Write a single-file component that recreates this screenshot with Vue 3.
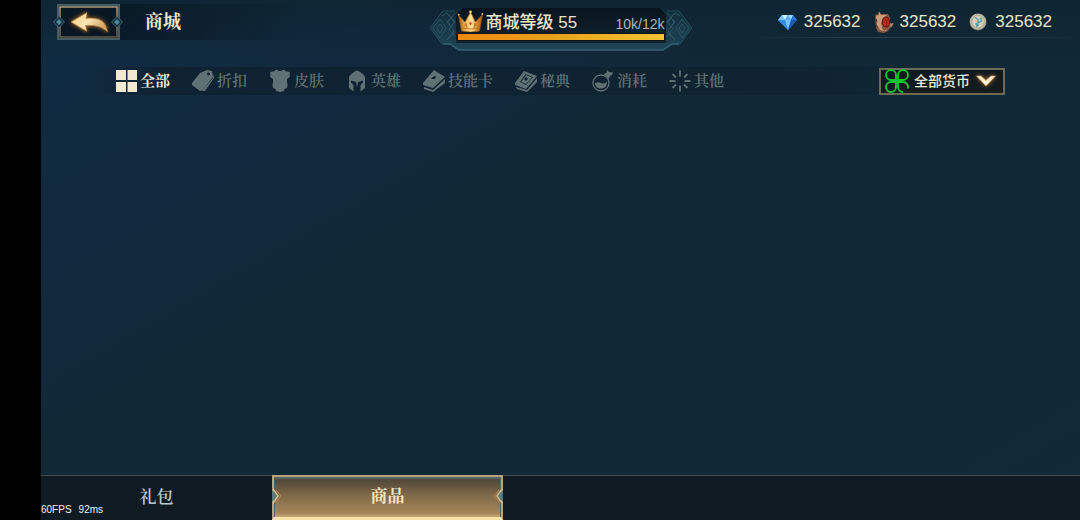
<script setup>
import { ref } from 'vue'

const categories = [
  { id: 'all', label: '全部' },
  { id: 'sale', label: '折扣' },
  { id: 'skin', label: '皮肤' },
  { id: 'hero', label: '英雄' },
  { id: 'card', label: '技能卡' },
  { id: 'book', label: '秘典' },
  { id: 'potion', label: '消耗' },
  { id: 'other', label: '其他' },
]
const activeCategory = ref('all')
const currency = ref('all')
const balances = [
  { id: 'gem', name: '钻石', amount: 325632 },
  { id: 'badge', name: '徽章', amount: 325632 },
  { id: 'coin', name: '银币', amount: 325632 },
]
const sections = [
  { id: 'packs', label: '礼包' },
  { id: 'goods', label: '商品' },
]
const activeSection = ref('goods')
</script>

<template>
  <div class="screen">
    <div class="stage">
      <header class="topbar">
        <div class="heading">
          <button class="back" type="button" aria-label="返回">
            <svg width="70" height="36" viewBox="0 0 70 36">
              <defs>
                <linearGradient id="arrowFill" x1="0" y1="0" x2="1" y2="0.4">
                  <stop offset="0" stop-color="#f6cf86" />
                  <stop offset="0.55" stop-color="#fbe6b4" />
                  <stop offset="1" stop-color="#d3a768" />
                </linearGradient>
                <linearGradient id="goldEdge" x1="0" y1="0" x2="0" y2="1">
                  <stop offset="0" stop-color="#b09a74" />
                  <stop offset="1" stop-color="#5f5b50" />
                </linearGradient>
              </defs>
              <rect x="5" y="1" width="61" height="34" fill="#0a1722" stroke="#465a62" stroke-width="2" />
              <rect x="7" y="3" width="57" height="30" fill="none" stroke="url(#goldEdge)" stroke-width="1.500" />
              <g fill="#102c3b" stroke="#4a6470" stroke-width="1">
                <path d="M6 12.500L11.500 18L6 23.500L.5 18Z" />
                <path d="M64 12.500L69.500 18L64 23.500L58.500 18Z" />
              </g>
              <path d="M6 15l3 3-3 3-3-3zM64 15l3 3-3 3-3-3z" fill="#4a8797" />
              <g class="arrow">
                <path d="M18 18L34 8.500l-1 6C46 13 53 17 54.500 28C49 22 42 21 32.500 21.500L34 27.500Z" fill="url(#arrowFill)" stroke="#b5783a" stroke-width=".6" stroke-linejoin="round" />
              </g>
            </svg>
          </button>
          <h1 class="title">商城</h1>
        </div>

        <section class="level">
          <svg class="level-frame" width="262" height="44" viewBox="0 0 262 44" aria-hidden="true">
            <defs>
              <linearGradient id="frameFill" x1="0" y1="0" x2="0" y2="1">
                <stop offset="0" stop-color="#102a38" />
                <stop offset="1" stop-color="#1f4656" />
              </linearGradient>
              <linearGradient id="plaque" x1="0" y1="0" x2="0" y2="1">
                <stop offset="0" stop-color="#09141d" />
                <stop offset="1" stop-color="#0e2431" />
              </linearGradient>
            </defs>
            <path d="M0 21L13 4H26L32 1H230L236 4H249L262 21L250 37H243L234 43H28L19 37H12Z" fill="url(#frameFill)" />
            <path d="M19 37H12L0 21L13 4H25M243 37h7L262 21L249 4H237" fill="none" stroke="#234c5c" />
            <path d="M13 37h7l9 6h204l9-6h7" fill="none" stroke="#356173" stroke-width="1.500" />
            <path d="M32 1H230L236 8V36H26V8Z" fill="url(#plaque)" />
            <g fill="none" stroke="#2b5363" stroke-width="1">
              <path d="M3 21l7-9 6 9-6 10zM7 21l3-4 3 4-3 5z" />
              <path d="M12 9l5-3 8 9-6 7 6 8M25 6l-8 9 7 9-7 9M17 6l8 9M17 33l8-8M21 11l-3 4 3 5 3-5z" />
            </g>
            <g transform="matrix(-1 0 0 1 262 0)" fill="none" stroke="#2b5363" stroke-width="1">
              <path d="M3 21l7-9 6 9-6 10zM7 21l3-4 3 4-3 5z" />
              <path d="M12 9l5-3 8 9-6 7 6 8M25 6l-8 9 7 9-7 9M17 6l8 9M17 33l8-8M21 11l-3 4 3 5 3-5z" />
            </g>
          </svg>
          <div class="level-row">
            <svg class="crown" width="27" height="22" viewBox="0 0 27 22" aria-hidden="true">
              <defs>
                <linearGradient id="crownFill" x1="0" y1="0" x2="1" y2="0">
                  <stop offset="0" stop-color="#a35c13" />
                  <stop offset=".35" stop-color="#f8c366" />
                  <stop offset=".55" stop-color="#ffe5a0" />
                  <stop offset=".75" stop-color="#d98f30" />
                  <stop offset="1" stop-color="#9c5a18" />
                </linearGradient>
              </defs>
              <path d="M4.500 21L1.500 5L8 12L13.500 2L18.500 12L25.500 4.500L22.500 21Q13.500 23 4.500 21Z" fill="url(#crownFill)" stroke="#9a5716" stroke-width=".7" />
              <path d="M5 18q8.500 2 17.500 0M9 13l1 5M18 13l-1 5" stroke="#ba7122" fill="none" stroke-width=".9" />
              <circle cx="13.500" cy="1.800" r="1.300" fill="#ffd37c" />
              <circle cx="1.700" cy="4.700" r="1" fill="#ef9c45" />
              <circle cx="25.300" cy="4" r="1" fill="#efaf50" />
              <path d="M13.500 11.500l1.500 2-1.500 2-1.500-2z" fill="#d64f35" />
              <circle cx="8.500" cy="15" r=".8" fill="#c95431" />
              <circle cx="18.500" cy="15" r=".8" fill="#c95431" />
            </svg>
            <span class="level-name">商城等级 55</span>
            <span class="level-count">10k/12k</span>
          </div>
          <div class="bar"></div>
        </section>

        <ul class="balances">
          <li v-for="b in balances" :key="b.id" :title="b.name">
            <svg v-if="b.id === 'gem'" width="20" height="20" viewBox="0 0 20 20">
              <path d="M4 3h11l4 5-9 10L0 8z" fill="#2f83e0" />
              <path d="M4 3l3 5H0z" fill="#7cc6fa" />
              <path d="M4 3h6L7 8z" fill="#c8eeff" />
              <path d="M10 3l3 5H7z" fill="#58acf5" />
              <path d="M10 3h5l-2 5z" fill="#9edbff" />
              <path d="M15 3l4 5h-6z" fill="#2b76d2" />
              <path d="M0 8h7l3 10z" fill="#338de6" />
              <path d="M7 8h6l-3 10z" fill="#75c2fc" />
              <path d="M13 8h6l-9 10z" fill="#1b57b4" />
            </svg>
            <svg v-else-if="b.id === 'badge'" width="20" height="22" viewBox="0 0 20 22">
              <path d="M1 4l3-1 1-3 2 3 7 0 2 4 0 4 1 2 3-1-2 4-2 1-2 3-4 2-6-1-2-4z" fill="#85593f" />
              <path d="M2 5l3-1 0-3 2 3 6 0-4 3-2 5 1 5 2 3-4-1-3-5z" fill="#c99a7c" />
              <path d="M16 13l3-1-2 4zM10 20l3-2-1 2z" fill="#c68f6a" />
              <ellipse cx="12" cy="11" rx="4" ry="5.500" fill="#5b1714" />
              <ellipse cx="12" cy="11" rx="3.200" ry="4.500" fill="#b8291f" />
              <path d="M11 8l2 2-1 3 1 2" fill="none" stroke="#7d1a14" stroke-width=".8" />
              <path d="M1 12l3 5M2 8l1 3" stroke="#55382d" />
            </svg>
            <svg v-else width="20" height="20" viewBox="0 0 20 20">
              <circle cx="9" cy="10" r="8.500" fill="#827e6c" />
              <circle cx="9" cy="9.700" r="8" fill="#bdb9a4" />
              <circle cx="9" cy="9.700" r="6.200" fill="#d3cfba" stroke="#a19c84" stroke-width=".7" />
              <path d="M6 5.500l3 2V14M9 10.500l3-1 0-4M7 11l1 4" fill="none" stroke="#4fa3a8" stroke-width="1.500" />
            </svg>
            <span>{{ b.amount }}</span>
          </li>
        </ul>
      </header>

      <main class="content">
        <div class="filters">
          <nav class="categories" aria-label="分类">
            <button
              v-for="c in categories"
              :key="c.id"
              type="button"
              class="category"
              :class="{ active: c.id === activeCategory }"
              :aria-pressed="c.id === activeCategory"
              @click="activeCategory = c.id"
            >
              <svg width="22" height="22" viewBox="0 0 22 22" fill="currentColor" aria-hidden="true">
                <path v-if="c.id === 'all'" d="M1 0h10v10H1zM12.500 0H22v10h-9.500zM1 12h10v10H1zM12.500 12H22v10h-9.500z" />
                <g v-else-if="c.id === 'sale'">
                  <path fill-rule="evenodd" d="M0 13L8 3l7-3 5 1 1 6-10 13-3 1L0 15zM16.500 2.500a1.500 1.500 0 1 0 .1 0z" />
                  <path d="M21.500 3l.5 5-9 13-3 0L21 8z" />
                </g>
                <path v-else-if="c.id === 'skin'" d="M1.500 2L6 1V0h2.500q2.500 2.500 5 0H16v1l4.500 1L21 6.500 18.500 9 18 8.500l0 4 .5 1.500-.5 4-2.500 1L15 21l-4 1-4-1-.5-2L4 18l-.5-4 .5-1.500v-4L3.500 9 1 6.500z" />
                <path v-else-if="c.id === 'hero'" d="M3 18L3 7Q5 3 11 .5q6 2.500 8 6.500v11l-4.500 3.500V15l2.500-2.500v-2L12 12l-1 5-1-5-5-1.500v2L7.500 15v6.500z" />
                <g v-else-if="c.id === 'card'">
                  <path fill-rule="evenodd" d="M0 13L11 0l11 7-12 11L0 15zM11.500 6l-3 2 0 1 3 0 2-2z" />
                  <path d="M1 17l9 3L22 9v4L10 22 1 19z" />
                </g>
                <g v-else-if="c.id === 'book'">
                  <path fill-rule="evenodd" d="M0 13L9 1l13 5-11 13-11-4zM10.500 4L5 12l6 3 7-8zM11 5l6 2.500-6 6.500-5-2zM11 7l2 2-2 2-2-2z" />
                  <path d="M1 17l11 3L22 8v4l-10 10-10-3z" />
                </g>
                <g v-else-if="c.id === 'potion'">
                  <circle cx="9" cy="13" r="8" fill="none" stroke="currentColor" stroke-width="1.300" />
                  <path d="M3 13q3-1.500 6 0t6-1.500q0 7-6 7t-6-5.500zM11.500 4l3-1 .5-3 2 2 4 .5-1 2.500-2 1-1 3z" />
                </g>
                <path v-else d="M11 0.500v6M11 15.500v6M0.500 11h6M15.500 11h6M3.500 4L7 7.500M15 14.500L18.500 18M18.500 4L15 7.500M7 14.500L3.500 18" fill="none" stroke="currentColor" stroke-width="1.800" />
              </svg>
              <span>{{ c.label }}</span>
            </button>
          </nav>

          <div class="currency">
            <svg class="clover" width="24" height="24" viewBox="0 0 24 24" fill="none" stroke="#16c532" stroke-width="1.800" aria-hidden="true">
              <path d="M11 11V6a5 5 0 1 0-5 5zM13 11V6a5 5 0 1 1 5 5zM11 13v5a5 5 0 1 1-5-5zM22.800 19.500a5 5 0 0 0-4.800-6.500h-5v5a5 5 0 0 0 5 5" />
            </svg>
            <select v-model="currency" aria-label="货币">
              <option value="all">全部货币</option>
              <option v-for="b in balances" :key="b.id" :value="b.id">{{ b.name }}</option>
            </select>
            <svg class="chevron" width="20" height="13" viewBox="0 0 20 13" aria-hidden="true">
              <path d="M.5 1L5 1l5 4.500L15 1h4.500L10 11z" fill="#fff1d2" stroke="#c99a62" stroke-width=".7" />
            </svg>
          </div>
        </div>
      </main>

      <footer class="sections">
        <button
          v-for="s in sections"
          :key="s.id"
          type="button"
          class="section"
          :class="{ selected: s.id === activeSection }"
          :aria-pressed="s.id === activeSection"
          @click="activeSection = s.id"
        >
          <template v-if="s.id === activeSection">
            <svg class="notch left" width="10" height="16" viewBox="0 0 10 16" aria-hidden="true">
              <path d="M0 2l5 6-5 6z" fill="#557b80" />
              <path d="M1 1l5 7-5 7" fill="none" stroke="#d3bb90" stroke-width="1.500" />
              <path d="M4 2l5 6-5 6" fill="none" stroke="#b68753" />
            </svg>
            <svg class="notch right" width="10" height="16" viewBox="0 0 10 16" aria-hidden="true">
              <path d="M10 2L5 8l5 6z" fill="#557b80" />
              <path d="M9 1L4 8l5 7" fill="none" stroke="#d3bb90" stroke-width="1.500" />
              <path d="M6 2L1 8l5 6" fill="none" stroke="#b68753" />
            </svg>
          </template>
          {{ s.label }}
        </button>
        <div class="stats"><span>60FPS</span><span>92ms</span></div>
      </footer>
    </div>
  </div>
</template>

<style>
body {
  background: #000;
}
</style>

<style scoped>
* {
  box-sizing: border-box;
}

.screen {
  min-height: 100vh;
  padding-left: 41px;
  display: flex;
  background: #000;
  font-family: "Liberation Sans", "Noto Sans CJK SC", sans-serif;
}

.stage {
  flex: 1;
  min-width: 0;
  display: flex;
  flex-direction: column;
  background:
    linear-gradient(180deg, rgba(14, 35, 47, 0.7), rgba(14, 35, 47, 0) 60px),
    linear-gradient(150deg, #0f2c42 0%, #11293e 24%, #112836 42%, #112836 80%, #102a39 100%);
}

button {
  margin: 0;
  padding: 0;
  border: 0;
  background: none;
  font: inherit;
  color: inherit;
  cursor: pointer;
}

svg {
  display: block;
  flex: none;
}

.topbar {
  display: grid;
  grid-template-columns: 1fr auto 1fr;
  align-items: start;
  height: 58px;
}

.heading {
  display: flex;
  align-items: flex-start;
  gap: 22px;
  margin-top: 4px;
  padding-left: 12px;
  height: 36px;
  background: linear-gradient(90deg, transparent 75px, rgba(8, 21, 32, 0.7) 80px, rgba(8, 21, 32, 0) 260px);
}

.arrow {
  filter: drop-shadow(0 0 2px #c97b27);
}

.title {
  margin: 0;
  font-family: "Noto Serif CJK SC", "Noto Sans CJK SC", serif;
  font-size: 18px;
  line-height: 32px;
  font-weight: 700;
  color: #efe8cc;
}

.level {
  position: relative;
  width: 262px;
  height: 44px;
  margin-top: 7px;
  padding: 2px 27px 0;
}

.level-frame {
  position: absolute;
  inset: 0;
}

.level-row {
  position: relative;
  display: flex;
  align-items: center;
  height: 24px;
}

.level-name {
  margin-left: 2px;
  padding-top: 4px;
  font-size: 17px;
  line-height: 24px;
  font-weight: 500;
  color: #ebe5c9;
  white-space: nowrap;
}

.level-count {
  margin-left: auto;
  padding-top: 6px;
  font-size: 14px;
  line-height: 20px;
  color: #aeb5ba;
}

.bar {
  position: relative;
  height: 8px;
  border: 1px solid #111416;
  background: linear-gradient(100deg, #e98a13 0%, #ef9618 25%, #e2a018 45%, #efae22 65%, #f2c335 100%);
}

.balances {
  list-style: none;
  display: flex;
  justify-self: end;
  gap: 13px;
  margin: 7px 0 0;
  padding: 0 28px 0 24px;
  height: 31px;
  border-bottom: 1px solid;
  border-image: linear-gradient(90deg, transparent, #25404a 30%, #25404a 70%, transparent) 1;
}

.balances li {
  display: flex;
  align-items: center;
  gap: 6px;
  font-size: 17px;
  line-height: 30px;
  color: #ebe5c9;
}

.content {
  flex: 1;
}

.filters {
  display: flex;
  align-items: center;
  justify-content: space-between;
  margin-top: 9px;
  padding: 0 75px 0 74px;
  height: 28px;
  background: linear-gradient(90deg, transparent 40px, rgba(14, 27, 39, 0.55) 120px, rgba(14, 31, 43, 0.5) 75%, transparent 86%);
}

.categories {
  display: flex;
  gap: 22px;
}

.category {
  display: flex;
  align-items: center;
  gap: 3px;
  font-family: "Noto Serif CJK SC", "Noto Sans CJK SC", serif;
  font-size: 15px;
  line-height: 20px;
  font-weight: 600;
  color: #5f7175;
  white-space: nowrap;
}

.category span {
  padding-bottom: 3px;
}

.category.active {
  color: #f0e8d0;
  font-weight: 700;
}

.currency {
  position: relative;
  margin-top: 1px;
}

.currency select {
  display: block;
  appearance: none;
  width: 126px;
  height: 27px;
  margin: 0;
  padding: 0 30px 3px 33px;
  border: 2px solid #6d6a58;
  border-radius: 0;
  background: linear-gradient(180deg, #0c1820, #171c1d);
  font-family: "Noto Sans CJK SC", sans-serif;
  font-size: 14px;
  font-weight: 500;
  color: #f0ead2;
}

.clover {
  position: absolute;
  left: 6px;
  top: 1px;
  pointer-events: none;
}

.chevron {
  position: absolute;
  right: 9px;
  top: 7px;
  filter: drop-shadow(0 0 2px #b56f2b);
  pointer-events: none;
}

.sections {
  position: relative;
  display: flex;
  height: 45px;
  border-top: 1px solid #4a4642;
  background: #101a22;
}

.section {
  position: relative;
  width: 231px;
  height: 44px;
  padding-bottom: 4px;
  font-family: "Noto Serif CJK SC", "Noto Sans CJK SC", serif;
  font-size: 17px;
  line-height: 36px;
  font-weight: 600;
  color: #b9c5cd;
}

.section.selected {
  height: 45px;
  margin-top: -1px;
  border: 2px solid #b7a27b;
  border-bottom: 3px solid #fae3a8;
  background: linear-gradient(180deg, #494137 0%, #7f6948 45%, #a5865a 90%, #c7a974 100%);
  box-shadow: inset 0 1px 0 1px #536462;
  font-weight: 700;
  color: #f6e5bd;
}

.notch {
  position: absolute;
  top: 11px;
}

.notch.left {
  left: -2px;
}

.notch.right {
  right: -2px;
}

.stats {
  position: absolute;
  left: 0;
  bottom: 4px;
  display: flex;
  gap: 7px;
  font-size: 10px;
  line-height: 12px;
  color: #eef2f4;
}
</style>
